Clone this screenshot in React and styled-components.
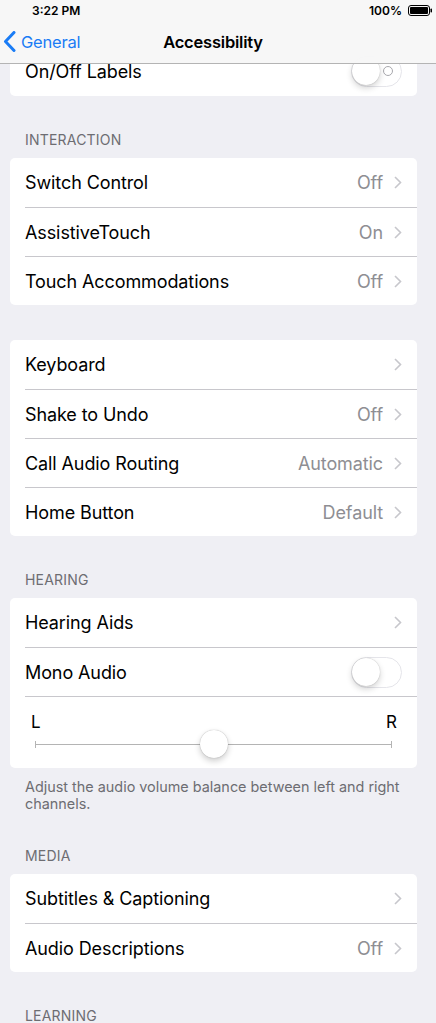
import React from "react";
import styled, { createGlobalStyle } from "styled-components";

const GlobalStyle = createGlobalStyle`
  html, body {
    margin: 0;
    padding: 0;
    background: #efeff4;
    font-family: Inter, "Liberation Sans", sans-serif;
    -webkit-font-smoothing: antialiased;
  }
  * {
    box-sizing: border-box;
  }
`;

const Screen = styled.div`
  width: 436px;
  height: 1023px;
  overflow: hidden;
  position: relative;
  background: #efeff4;
`;

const TopBar = styled.header`
  position: absolute;
  top: 0;
  left: 0;
  right: 0;
  z-index: 2;
  background: rgba(247, 247, 247, 0.97);
  border-bottom: 1px solid #b4b4b4;
`;

const StatusBar = styled.div`
  height: 20px;
  display: flex;
  align-items: center;
  justify-content: space-between;
  padding: 0 4px 0 32px;
  font-size: 12px;
  font-weight: 600;
  color: #000;
`;

const Battery = styled.div`
  display: flex;
  align-items: center;
  gap: 6px;
`;

const NavBar = styled.div`
  height: 43px;
  display: flex;
  align-items: center;
  position: relative;
`;

const BackButton = styled.div`
  display: flex;
  align-items: center;
  gap: 5px;
  padding-left: 3px;
  color: #1a7cf5;
  font-size: 16.5px;
  letter-spacing: -0.2px;
`;

const Title = styled.div`
  position: absolute;
  left: 0;
  right: 10px;
  text-align: center;
  font-size: 16.5px;
  font-weight: 600;
  letter-spacing: -0.2px;
  color: #000;
  pointer-events: none;
`;

const Content = styled.div`
  padding: 0 19px 0 10px;
  padding-top: 47px;
`;

const Card = styled.div`
  background: #fff;
  border-radius: 5px;
  overflow: hidden;
  margin-top: ${(p) => (p.$gap ? "35px" : "0")};
`;

const Row = styled.div`
  height: 49px;
  display: flex;
  align-items: center;
  padding-left: 15px;
  & + & {
    border-top: 1px solid #c8c7cc;
    margin-left: 15px;
    padding-left: 0;
  }
`;

const Label = styled.div`
  flex: 1;
  font-size: 18px;
  letter-spacing: -0.1px;
  color: #000;
`;

const Value = styled.div`
  font-size: 18px;
  letter-spacing: -0.1px;
  color: #8e8e93;
  margin-right: 11px;
`;

const ChevronWrap = styled.div`
  width: 8px;
  margin-right: 15px;
  display: flex;
  align-items: center;
`;

const SectionHeader = styled.div`
  margin-top: 35px;
  padding: 0 15px 10px;
  line-height: 17px;
  font-size: 14px;
  letter-spacing: 0.2px;
  color: #6d6d72;
`;

const Footer = styled.div`
  padding: 10px 15px 0;
  font-size: 14.4px;
  line-height: 17px;
  color: #6d6d72;
`;

const Switch = styled.div`
  width: 51px;
  height: 31px;
  border-radius: 16px;
  border: 1.5px solid #e5e5ea;
  margin-right: 15px;
  position: relative;
`;

const Knob = styled.div`
  position: absolute;
  top: 0;
  left: 0;
  width: 28px;
  height: 28px;
  border-radius: 50%;
  background: #fff;
  box-shadow: 0 3px 6px rgba(0, 0, 0, 0.18), 0 0 1px rgba(0, 0, 0, 0.3);
`;

const OffMark = styled.div`
  position: absolute;
  right: 8px;
  top: 9px;
  width: 10px;
  height: 10px;
  border-radius: 50%;
  border: 1px solid #a8a8ad;
`;

const SliderRow = styled.div`
  height: 72px;
  border-top: 1px solid #c8c7cc;
  margin-left: 15px;
  display: flex;
  flex-direction: column;
`;

const SliderLabels = styled.div`
  display: flex;
  justify-content: space-between;
  padding: 15px 20px 0 6px;
  font-size: 17px;
  line-height: 20px;
  color: #000;
`;

const Track = styled.div`
  position: relative;
  margin: 8px 25px 0 10px;
  height: 8px;
  display: flex;
  align-items: center;
`;

const TrackLine = styled.div`
  flex: 1;
  height: 1px;
  background: #b4b4b4;
`;

const Tick = styled.div`
  width: 1px;
  height: 7px;
  background: #b4b4b4;
`;

const SliderKnob = styled.div`
  position: absolute;
  top: -10px;
  width: 28px;
  height: 28px;
  border-radius: 50%;
  background: #fff;
  box-shadow: 0 3px 6px rgba(0, 0, 0, 0.2), 0 0 1px rgba(0, 0, 0, 0.35);
`;

const Chevron = () => (
  <ChevronWrap>
    <svg width="8" height="13" viewBox="0 0 8 13">
      <path d="M1 1l5.5 5.5L1 12" fill="none" stroke="#c7c7cc" strokeWidth="1.6" />
    </svg>
  </ChevronWrap>
);

const Toggle = ({ labels }) => (
  <Switch>
    {labels && <OffMark />}
    <Knob />
  </Switch>
);

const NavRow = ({ label, value }) => (
  <Row>
    <Label>{label}</Label>
    {value && <Value>{value}</Value>}
    <Chevron />
  </Row>
);

export default function App() {
  return (
    <Screen>
      <GlobalStyle />
      <TopBar>
        <StatusBar>
          <span>3:22 PM</span>
          <Battery>
            <span>100%</span>
            <svg width="24" height="11" viewBox="0 0 24 11">
              <rect x="0.5" y="0.5" width="21" height="10" rx="2.5" fill="none" stroke="#000" />
              <rect x="2" y="2" width="18" height="7" rx="1" fill="#000" />
              <rect x="22.5" y="3.5" width="1.5" height="4" rx="0.7" fill="#000" />
            </svg>
          </Battery>
        </StatusBar>
        <NavBar>
          <BackButton>
            <svg width="13" height="21" viewBox="0 0 13 21">
              <path d="M11 1.5L2.5 10.5l8.5 9" fill="none" stroke="#1a7cf5" strokeWidth="3" strokeLinecap="round" strokeLinejoin="round" />
            </svg>
            General
          </BackButton>
          <Title>Accessibility</Title>
        </NavBar>
      </TopBar>

      <Content>
        <Card>
          <Row>
            <Label>On/Off Labels</Label>
            <Toggle labels />
          </Row>
        </Card>

        <SectionHeader>INTERACTION</SectionHeader>
        <Card>
          <NavRow label="Switch Control" value="Off" />
          <NavRow label="AssistiveTouch" value="On" />
          <NavRow label="Touch Accommodations" value="Off" />
        </Card>

        <Card $gap>
          <NavRow label="Keyboard" />
          <NavRow label="Shake to Undo" value="Off" />
          <NavRow label="Call Audio Routing" value="Automatic" />
          <NavRow label="Home Button" value="Default" />
        </Card>

        <SectionHeader>HEARING</SectionHeader>
        <Card>
          <NavRow label="Hearing Aids" />
          <Row>
            <Label>Mono Audio</Label>
            <Toggle />
          </Row>
          <SliderRow>
            <SliderLabels>
              <span>L</span>
              <span>R</span>
            </SliderLabels>
            <Track>
              <Tick />
              <TrackLine />
              <Tick />
              <SliderKnob style={{ left: `calc(50% - 14px)` }} />
            </Track>
          </SliderRow>
        </Card>
        <Footer>Adjust the audio volume balance between left and right channels.</Footer>

        <SectionHeader>MEDIA</SectionHeader>
        <Card>
          <NavRow label="Subtitles &amp; Captioning" />
          <NavRow label="Audio Descriptions" value="Off" />
        </Card>

        <SectionHeader>LEARNING</SectionHeader>
      </Content>
    </Screen>
  );
}
